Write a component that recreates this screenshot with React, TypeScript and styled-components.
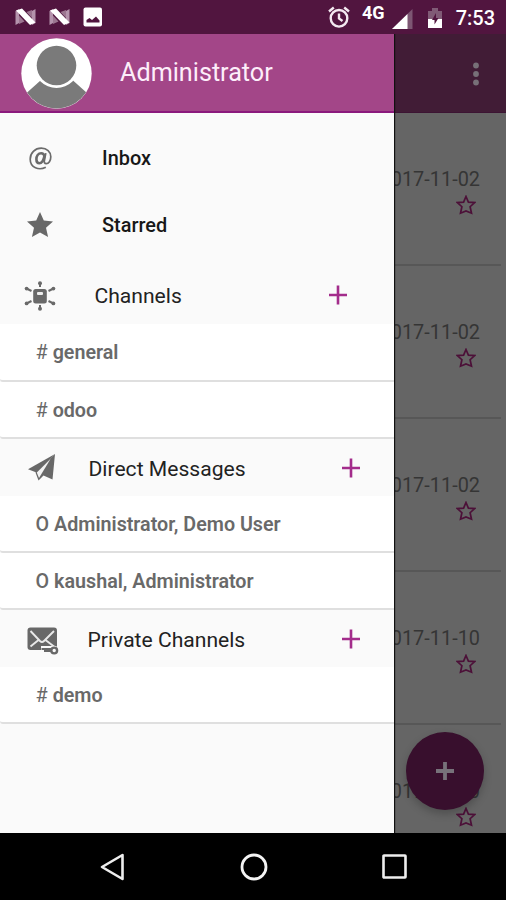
import React from "react";
import styled, { createGlobalStyle } from "styled-components";

const GlobalStyle = createGlobalStyle`
  * { box-sizing: border-box; }
  body { margin: 0; font-family: Roboto, "Noto Sans", sans-serif; background: #000; }
`;

const Screen = styled.div`
  width: 506px;
  height: 900px;
  display: flex;
  flex-direction: column;
  overflow: hidden;
`;

const StatusBar = styled.header`
  height: 34px;
  flex: none;
  background: #51153f;
  color: #fff;
  display: flex;
  align-items: center;
  padding: 0 11px 0 15px;
`;

const Notifications = styled.div`
  display: flex;
  align-items: center;
  gap: 13px;
  flex: 1;
`;

const Clock = styled.span`
  font-size: 20px;
  font-weight: 500;
  line-height: 24px;
  margin: 2px 0 0 14px;
`;

const Network = styled.span`
  font-size: 18px;
  font-weight: 700;
  line-height: 20px;
  margin: -8px 7px 0 12px;
`;

const Icon = styled.svg<{ $ml?: number; $mr?: number; $mt?: number }>`
  display: block;
  flex: none;
  margin-left: ${(p) => p.$ml ?? 0}px;
  margin-right: ${(p) => p.$mr ?? 0}px;
  margin-top: ${(p) => p.$mt ?? 0}px;
`;

const Body = styled.div`
  position: relative;
  height: 799px;
  flex: none;
  overflow: hidden;
`;

const Inbox = styled.main`
  height: 100%;
  background: #656565;
`;

const AppBar = styled.div`
  height: 79px;
  background: #411c36;
  border-bottom: 1px solid #3c1433;
  display: flex;
  align-items: center;
  justify-content: flex-end;
  padding-right: 26px;
`;

const MailRow = styled.div`
  height: 153px;
  margin-right: 5px;
  border-bottom: 2px solid #575757;
  display: flex;
  flex-direction: column;
  align-items: flex-end;
  padding: 55px 21px 0 0;
`;

const MailDate = styled.time`
  font-size: 19.9px;
  line-height: 24px;
  color: #353535;
`;

const Fab = styled.div`
  position: absolute;
  left: 406px;
  top: 698px;
  width: 78px;
  height: 78px;
  border-radius: 50%;
  background: #380f2d;
  box-shadow: 0 4px 9px rgba(0, 0, 0, 0.22);
  display: flex;
  align-items: center;
  justify-content: center;
`;

const Drawer = styled.aside`
  position: absolute;
  left: 0;
  top: 0;
  width: 394px;
  height: 100%;
  background: #fafafa;
  box-shadow: 1px 0 1px #111;
  display: flex;
  flex-direction: column;
`;

const Profile = styled.div`
  height: 79px;
  flex: none;
  background: #a34688;
  border-bottom: 2px solid #8b1a7d;
  display: flex;
  align-items: center;
  padding-left: 21px;
`;

const ProfileName = styled.span`
  color: #fdeefa;
  font-size: 25.2px;
  line-height: 30px;
  margin-left: 27px;
`;

const Shortcuts = styled.nav`
  padding-top: 12px;
`;

const Shortcut = styled.div`
  height: 67px;
  display: flex;
  align-items: center;
  padding-left: 24px;
`;

const IconSlot = styled.span`
  width: 32px;
  flex: none;
  display: flex;
  justify-content: center;
`;

const ShortcutLabel = styled.span`
  margin-left: 46px;
  font-size: 19.9px;
  font-weight: 500;
  line-height: 24px;
  color: #171717;
`;

const SectionHead = styled.div<{ $height: number; $top: number; $inset: number; $right: number }>`
  height: ${(p) => p.$height}px;
  display: flex;
  align-items: center;
  padding: ${(p) => p.$top}px ${(p) => p.$right}px 0 ${(p) => p.$inset}px;
`;

const SectionTitle = styled.h2<{ $gap: number }>`
  margin: 0 0 0 ${(p) => p.$gap}px;
  flex: 1;
  font-size: 21.1px;
  font-weight: 400;
  line-height: 26px;
  color: #222;
`;

const Channel = styled.div<{ $height: number }>`
  height: ${(p) => p.$height}px;
  background: #fff;
  border-bottom: 2px solid #dfdfdf;
  border-bottom-left-radius: 3px;
  padding: 2px 0 0 35.5px;
  display: flex;
  align-items: center;
  gap: 5px;
  font-size: 19.7px;
  font-weight: 600;
  line-height: 24px;
  color: #696969;
`;

const Mark = styled.span<{ $weight: number }>`
  font-weight: ${(p) => p.$weight};
`;

const NavBar = styled.footer`
  flex: 1;
  background: #000;
  display: flex;
  align-items: center;
  padding: 0 99px 0 100px;
  justify-content: space-between;
`;

const NougatMark = () => (
  <Icon width="21" height="18" viewBox="0 0 21 18">
    <path d="M0.500 3 4 1v14l-3.500 2zM17 3l3.500-2v14L17 17z" fill="#b493ac" />
    <path d="M4 7.500l5.500 6L4 16zM17 10l-5.500-6L17 2z" fill="#9b7590" />
    <path d="M1 2.500 7 0.500 20.500 14.500 15 17z" fill="#fff" />
  </Icon>
);

const PictureMark = () => (
  <Icon width="20" height="20" viewBox="0 0 20 20">
    <rect x="0.500" y="0.500" width="18.500" height="19" rx="2" fill="#fff" />
    <path d="M3.500 15.500v-2.500l3-2 2.500 2 4-3.500 3.500 4v2z" fill="#51153f" />
  </Icon>
);

const AlarmIcon = () => (
  <Icon width="22" height="22" viewBox="0 0 22 22" fill="none" stroke="#f4e9f1" strokeWidth="2.400" $mt={0}>
    <circle cx="11" cy="12.300" r="8.300" />
    <path d="M1 5.500 5.800 1.500M21 5.500 16.200 1.500M11 7.500v5l3.500 2.500" />
  </Icon>
);

const SignalIcon = () => (
  <Icon width="21" height="20" viewBox="0 0 21 20" $mt={3}>
    <path d="M0 20 20.500 0v20z" fill="#7d5673" />
    <path d="M0 20 15.500 5v15z" fill="#fff" />
  </Icon>
);

const BatteryIcon = () => (
  <Icon width="14" height="20" viewBox="0 0 14 20" $ml={15} $mt={2}>
    <path d="M0 3h4V0h6v3h4v9H0z" fill="#805b76" />
    <path d="M0 11h14v9H0z" fill="#fff" />
    <path d="M8 5 4 12h2.500v4.500L10.500 10H8z" fill="#51153f" />
  </Icon>
);

const OutlineStar = () => (
  <Icon width="20" height="20" viewBox="0 0 20 20" $mt={3} $mr={4}>
    <path
      d="M10 1.500 12.400 7.100 18.700 7.600 14.100 11.700 15.500 18.200 10 16 4.500 18.200 5.900 11.700 1.300 7.600 7.600 7.100z"
      fill="none"
      stroke="#4c1038"
      strokeWidth="1.700"
    />
  </Icon>
);

const Avatar = () => (
  <Icon width="72" height="72" viewBox="0 0 72 72" $mt={2}>
    <defs>
      <clipPath id="avatar-disc">
        <circle cx="35.500" cy="35.500" r="35" />
      </clipPath>
    </defs>
    <circle cx="35.500" cy="35.500" r="35.200" fill="#fff" />
    <g clipPath="url(#avatar-disc)" fill="#7a7a7a">
      <path d="M5 55.500 19.500 42.500H52L66 55v17H5z" />
      <circle cx="35.500" cy="27.500" r="22.500" fill="#fff" />
      <circle cx="35.500" cy="27.500" r="19.800" />
    </g>
  </Icon>
);

const SolidStar = () => (
  <Icon width="26" height="25" viewBox="0 0 26 25" $mt={-2}>
    <path d="M13 0 16.800 8.600 26 9.500 19 15.700 21.100 25 13 20.500 4.900 25 7 15.700 0 9.500 9.200 8.600z" fill="#686868" />
  </Icon>
);

const AtIcon = () => (
  <Icon width="23" height="23" viewBox="0 0 23 23" fill="none" stroke="#6b6b6b" strokeWidth="1.700" $mt={-1}>
    <path d="M16.800 20.300C10 23.700 1.200 20.800 1.200 12.200 1.200 5.800 6 1.200 12.300 1.200c5.500 0 9.500 3.500 9.500 8.500 0 4-2.100 6.900-4.600 6.900-1.700 0-2.200-1.200-1.800-3l1.400-7.400" />
    <path d="M15.400 9C15 6.900 13.700 6.200 12.200 6.200c-2.900 0-4.800 3-4.800 6.100 0 2.400 1.100 3.900 3 3.900 2.500 0 4.200-2.600 5-7.200z" strokeWidth="2.600" />
  </Icon>
);

const HubIcon = () => (
  <Icon width="32" height="32" viewBox="0 0 32 32">
    <path
      d="M16 7V2.500M16 25V29.500M7.500 11 3.500 9M24.500 11 28.500 9M7.500 21 3.500 23M24.500 21 28.500 23"
      stroke="#696969"
      strokeWidth="2"
    />
    <g fill="#696969">
      <circle cx="16" cy="3.200" r="2" />
      <circle cx="16" cy="28.800" r="2" />
      <circle cx="2.600" cy="8.600" r="1.900" />
      <circle cx="29.400" cy="8.600" r="1.900" />
      <circle cx="2.600" cy="23.400" r="1.900" />
      <circle cx="29.400" cy="23.400" r="1.900" />
      <rect x="9.200" y="9" width="13.600" height="14.500" rx="2.500" />
    </g>
    <rect x="13" y="12" width="6" height="3" rx="1" fill="#eee" />
  </Icon>
);

const PlaneIcon = () => (
  <Icon width="28" height="27" viewBox="0 0 28 27" $mt={-2}>
    <path d="M0 15.200 27 0 8.500 18.500z" fill="#686868" />
    <path d="M27 0 24.500 25.500 15.500 21.500 10.500 26.500 7.500 18.500z" fill="#686868" />
    <path d="M8.800 18.500 22.500 5 11 24z" fill="#f2f2f2" />
  </Icon>
);

const PrivateMailIcon = () => (
  <Icon width="32" height="28" viewBox="0 0 32 28" $mt={2}>
    <rect x="0.500" y="0.500" width="29.500" height="22.500" rx="3" fill="#686868" />
    <path d="M3.500 4 13 14q2 2 4 0L27 4M3.500 19.500 11.500 13M27 19.500 18.500 13" fill="none" stroke="#e9e9e9" strokeWidth="1.900" />
    <path d="M14 21.500h11" stroke="#fafafa" strokeWidth="5" />
    <circle cx="27" cy="23.500" r="4.800" fill="#fafafa" />
    <path d="M14.500 22H24M17 23.800H24" stroke="#686868" strokeWidth="2.200" />
    <circle cx="27.200" cy="23.500" r="2.900" fill="#fafafa" stroke="#686868" strokeWidth="2.400" />
  </Icon>
);

const PlusIcon = () => (
  <Icon width="18" height="20" viewBox="0 0 18 20" $mt={-2}>
    <path d="M9 0.500v19M0 10h18" stroke="#a32c8b" strokeWidth="2.600" />
  </Icon>
);

type Section = {
  title: string;
  icon: React.ReactNode;
  height: number;
  top: number;
  inset: number;
  gap: number;
  right: number;
  channels: { mark: string; name: string; height: number }[];
};

const sections: Section[] = [
  {
    title: "Channels", icon: <HubIcon />, height: 65, top: 9, inset: 24, gap: 38.5, right: 47,
    channels: [
      { mark: "#", name: "general", height: 58 },
      { mark: "#", name: "odoo", height: 57 },
    ],
  },
  {
    title: "Direct Messages", icon: <PlaneIcon />, height: 57, top: 2, inset: 26, gap: 30.5, right: 34,
    channels: [
      { mark: "O", name: "Administrator, Demo User", height: 57 },
      { mark: "O", name: "kaushal, Administrator", height: 57 },
    ],
  },
  {
    title: "Private Channels", icon: <PrivateMailIcon />, height: 57, top: 2, inset: 27, gap: 28.5, right: 34,
    channels: [{ mark: "#", name: "demo", height: 57 }],
  },
];

const dates = ["2017-11-02", "2017-11-02", "2017-11-02", "2017-11-10", "2017-11-10"];

export default function App() {
  return (
    <>
      <GlobalStyle />
      <Screen>
        <StatusBar>
          <Notifications>
            <NougatMark />
            <NougatMark />
            <PictureMark />
          </Notifications>
          <AlarmIcon />
          <Network>4G</Network>
          <SignalIcon />
          <BatteryIcon />
          <Clock>7:53</Clock>
        </StatusBar>
        <Body>
          <Inbox>
            <AppBar>
              <Icon width="8" height="24" viewBox="0 0 8 24" fill="#777078" $mt={1}>
                <circle cx="4" cy="3.500" r="2.900" />
                <circle cx="4" cy="12" r="2.900" />
                <circle cx="4" cy="20.500" r="2.900" />
              </Icon>
            </AppBar>
            {dates.map((date, i) => (
              <MailRow key={i}>
                <MailDate>{date}</MailDate>
                <OutlineStar />
              </MailRow>
            ))}
          </Inbox>
          <Fab>
            <Icon width="20" height="20" viewBox="0 0 20 20">
              <path d="M10 1v18M1 10h18" stroke="#77727a" strokeWidth="3.800" />
            </Icon>
          </Fab>
          <Drawer>
            <Profile>
              <Avatar />
              <ProfileName>Administrator</ProfileName>
            </Profile>
            <Shortcuts>
              <Shortcut>
                <IconSlot><AtIcon /></IconSlot>
                <ShortcutLabel>Inbox</ShortcutLabel>
              </Shortcut>
              <Shortcut>
                <IconSlot><SolidStar /></IconSlot>
                <ShortcutLabel>Starred</ShortcutLabel>
              </Shortcut>
            </Shortcuts>
            {sections.map((s) => (
              <section key={s.title}>
                <SectionHead $height={s.height} $top={s.top} $inset={s.inset} $right={s.right}>
                  <IconSlot>{s.icon}</IconSlot>
                  <SectionTitle $gap={s.gap}>{s.title}</SectionTitle>
                  <PlusIcon />
                </SectionHead>
                {s.channels.map((c) => (
                  <Channel key={c.name} $height={c.height}>
                    <Mark $weight={c.mark === "#" ? 400 : 500}>{c.mark}</Mark>
                    <span>{c.name}</span>
                  </Channel>
                ))}
              </section>
            ))}
          </Drawer>
        </Body>
        <NavBar>
          <Icon width="25" height="28" viewBox="0 0 25 28" fill="none" stroke="#eee" strokeWidth="2.600">
            <path d="M2 14 22.500 2v24z" strokeLinejoin="round" />
          </Icon>
          <Icon width="28" height="28" viewBox="0 0 28 28" fill="none" stroke="#f4f4f4" strokeWidth="2.800">
            <circle cx="14" cy="14" r="12" />
          </Icon>
          <Icon width="25" height="25" viewBox="0 0 25 25" fill="none" stroke="#eee" strokeWidth="2.600">
            <rect x="1.500" y="1.500" width="22" height="22" rx="0.500" />
          </Icon>
        </NavBar>
      </Screen>
    </>
  );
}
